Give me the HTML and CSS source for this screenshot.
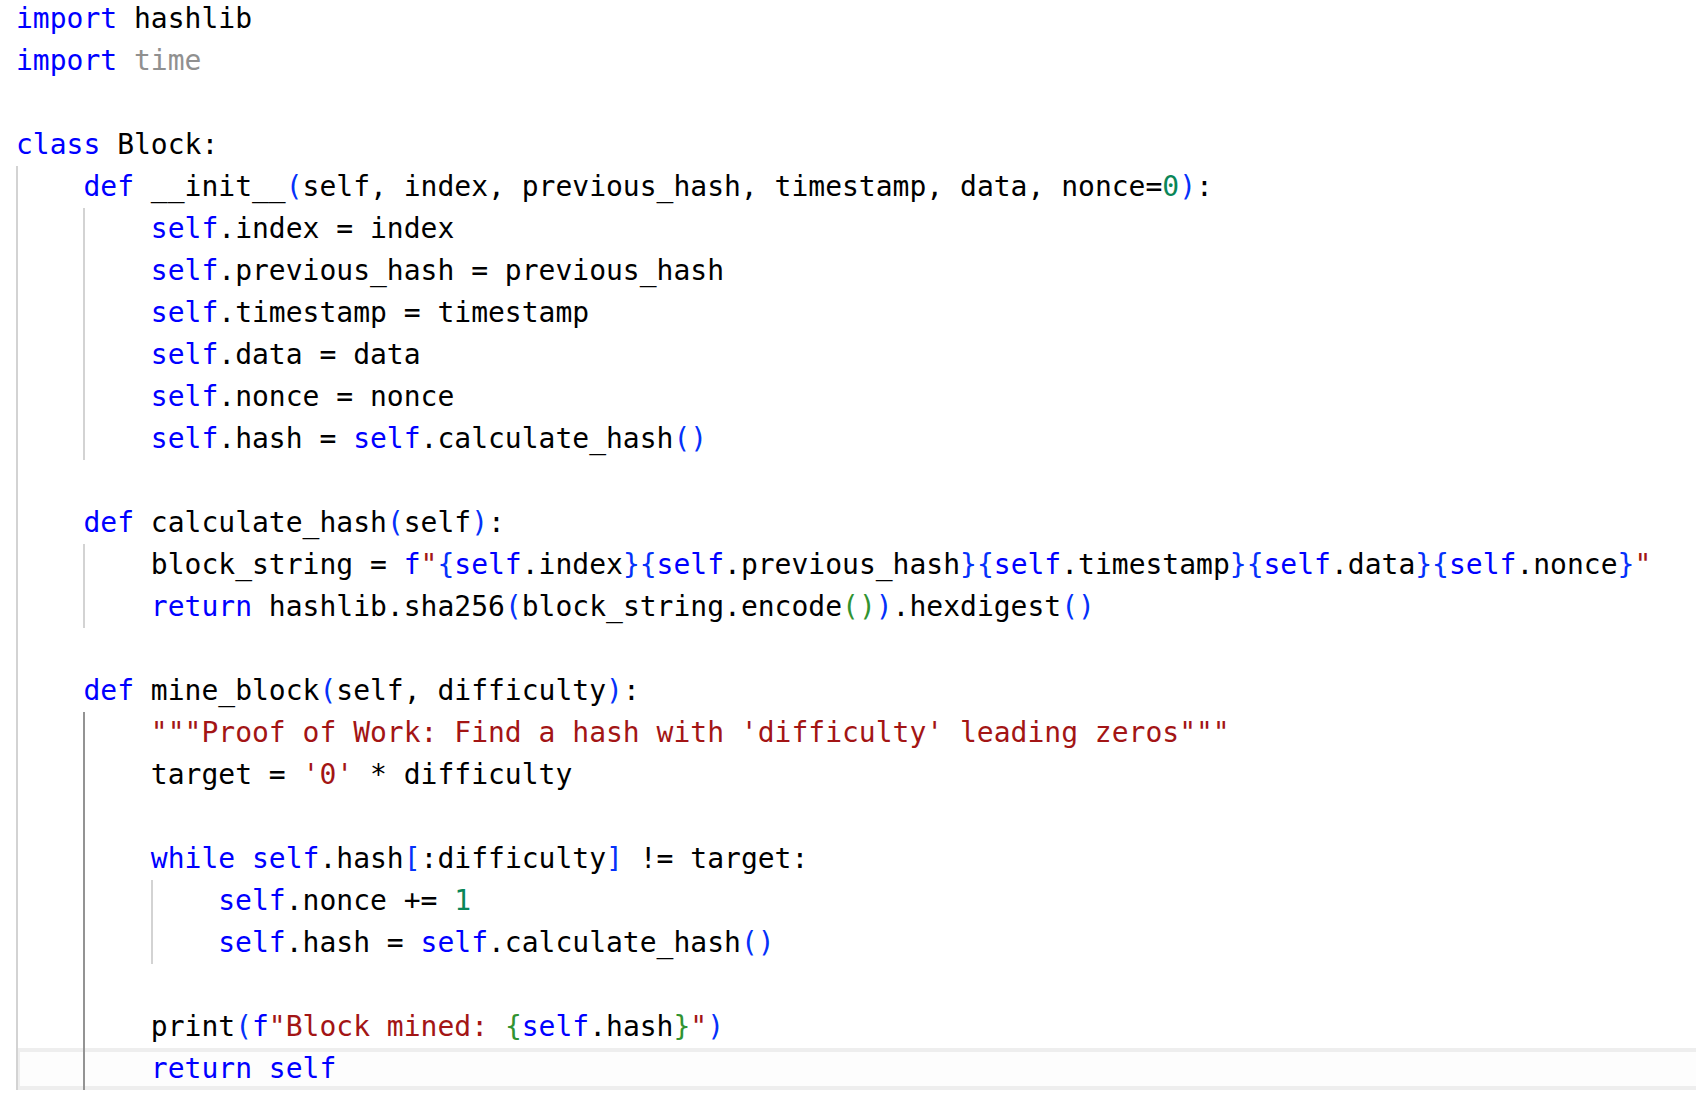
FILE: index.html
```html
<!DOCTYPE html>
<html lang="en">
<head>
<meta charset="utf-8">
<title>block.py</title>
<link rel="stylesheet" href="styles.css">
</head>
<body>
<div class="editor">
  <div class="line"><span class="kw">import</span> hashlib</div>
  <div class="line"><span class="kw">import</span> <span class="faded">time</span></div>
  <div class="line"></div>
  <div class="line"><span class="kw">class</span> Block:</div>
  <div class="guide">
    <div class="line"><span class="kw">def</span> __init__<span class="b1">(</span>self, index, previous_hash, timestamp, data, nonce=<span class="num">0</span><span class="b1">)</span>:</div>
    <div class="guide">
      <div class="line"><span class="kw">self</span>.index = index</div>
      <div class="line"><span class="kw">self</span>.previous_hash = previous_hash</div>
      <div class="line"><span class="kw">self</span>.timestamp = timestamp</div>
      <div class="line"><span class="kw">self</span>.data = data</div>
      <div class="line"><span class="kw">self</span>.nonce = nonce</div>
      <div class="line"><span class="kw">self</span>.hash = <span class="kw">self</span>.calculate_hash<span class="b1">()</span></div>
    </div>
    <div class="line"></div>
    <div class="line"><span class="kw">def</span> calculate_hash<span class="b1">(</span>self<span class="b1">)</span>:</div>
    <div class="guide">
      <div class="line">block_string = <span class="kw">f</span><span class="str">"</span><span class="b1">{</span><span class="kw">self</span>.index<span class="b1">}{</span><span class="kw">self</span>.previous_hash<span class="b1">}{</span><span class="kw">self</span>.timestamp<span class="b1">}{</span><span class="kw">self</span>.data<span class="b1">}{</span><span class="kw">self</span>.nonce<span class="b1">}</span><span class="str">"</span></div>
      <div class="line"><span class="kw">return</span> hashlib.sha256<span class="b1">(</span>block_string.encode<span class="b2">()</span><span class="b1">)</span>.hexdigest<span class="b1">()</span></div>
    </div>
    <div class="line"></div>
    <div class="line"><span class="kw">def</span> mine_block<span class="b1">(</span>self, difficulty<span class="b1">)</span>:</div>
    <div class="guide active">
      <div class="line"><span class="str">"""Proof of Work: Find a hash with 'difficulty' leading zeros"""</span></div>
      <div class="line">target = <span class="str">'0'</span> * difficulty</div>
      <div class="line"></div>
      <div class="line"><span class="kw">while</span> <span class="kw">self</span>.hash<span class="b1">[</span>:difficulty<span class="b1">]</span> != target:</div>
      <div class="guide">
        <div class="line"><span class="kw">self</span>.nonce += <span class="num">1</span></div>
        <div class="line"><span class="kw">self</span>.hash = <span class="kw">self</span>.calculate_hash<span class="b1">()</span></div>
      </div>
      <div class="line"></div>
      <div class="line">print<span class="b1">(</span><span class="kw">f</span><span class="str">"Block mined: </span><span class="b2">{</span><span class="kw">self</span>.hash<span class="b2">}</span><span class="str">"</span><span class="b1">)</span></div>
      <div class="line current"><span class="kw">return</span> <span class="kw">self</span></div>
    </div>
  </div>
</div>
</body>
</html>
```
FILE: styles.css
```css
html {
  background: #ffffff;
}

html, body {
  margin: 0;
  padding: 0;
  overflow: hidden;
}

.editor {
  position: relative;
  z-index: 0;
  font-family: "DejaVu Sans Mono", "Liberation Mono", monospace;
  font-size: 28px;
  color: #000000;
  margin-top: -2px;
  padding-left: 16px;
}

.line {
  height: 42px;
  line-height: 42px;
  white-space: pre;
}

.guide {
  border-left: 2px solid #d3d3d3;
  padding-left: calc(4ch - 2px);
}

.guide.active {
  border-left-color: #939393;
}

.line.current {
  position: relative;
}

.line.current::before {
  content: "";
  position: absolute;
  top: 0;
  bottom: 0;
  left: -8ch;
  right: -20px;
  border: 4px solid #eeeeee;
  background: #fdfdfd;
  z-index: -1;
}

.kw { color: #0000ff; }
.str { color: #a31515; }
.num { color: #098658; }
.b1 { color: #0431fa; }
.b2 { color: #319331; }
.faded { color: #909090; }
```
